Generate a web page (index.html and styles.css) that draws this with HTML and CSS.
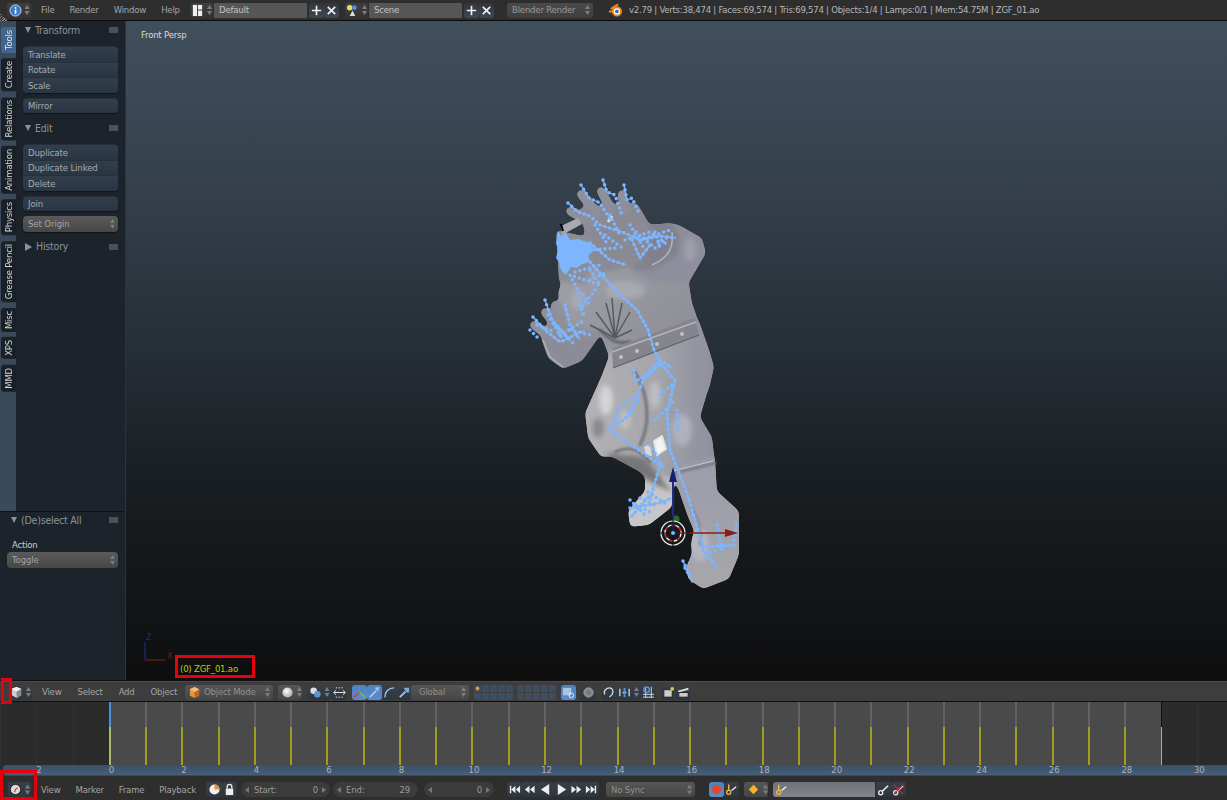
FILE: index.html
```html
<!DOCTYPE html>
<html lang="en">
<head>
<meta charset="utf-8">
<title>Blender 2.79</title>
<link rel="stylesheet" href="styles.css">
</head>
<body>
<svg class="defs" width="0" height="0">
  <defs>
    <linearGradient id="skin" x1="0" y1="0" x2="1" y2="1"><stop offset="0" stop-color="#a0a0a8"/><stop offset="1" stop-color="#85858f"/></linearGradient>
    <linearGradient id="leg" x1="0" y1="0" x2="1" y2="0"><stop offset="0" stop-color="#b4b4b7"/><stop offset=".5" stop-color="#a6a6ab"/><stop offset="1" stop-color="#8e8e9e"/></linearGradient>
    <linearGradient id="boot" x1="0" y1="0" x2="0" y2="1"><stop offset="0" stop-color="#9c9cab"/><stop offset="1" stop-color="#a6a6aa"/></linearGradient>
    <radialGradient id="sph" cx=".4" cy=".35"><stop offset="0" stop-color="#fff"/><stop offset="1" stop-color="#bbb"/></radialGradient>
    <filter id="smooth" x="-10%" y="-10%" width="120%" height="120%" color-interpolation-filters="sRGB">
      <feGaussianBlur stdDeviation="2.600"/>
      <feComponentTransfer><feFuncA type="linear" slope="9" intercept="-4"/></feComponentTransfer>
    </filter>
    <filter id="crease" x="-30%" y="-30%" width="160%" height="160%"><feGaussianBlur stdDeviation="1"/></filter>
    <symbol id="i-cube" viewBox="0 0 14 14"><path d="M7 1l5 2v7l-5 3-5-3V3z" fill="#cfcfcf"/><path d="M7 6l5-3v7l-5 3z" fill="#8a8a8a"/><path d="M2 3l5 3 5-3-5-2z" fill="#f2f2f2"/></symbol>
    <symbol id="i-obj" viewBox="0 0 14 14"><path d="M7 1l5 2.500v7l-5 2.500-5-2.500v-7z" fill="#e8953a"/><path d="M7 6.500l5-3v7l-5 2.500z" fill="#b86a20"/><path d="M2 3.500l5 3 5-3-5-2.500z" fill="#f4be7a"/></symbol>
    <symbol id="i-clock" viewBox="0 0 14 14"><circle cx="7" cy="7" r="5.500" fill="#ddd" stroke="#222"/><path d="M7 7l2.500-2M7 7l-1 3" stroke="#c33" stroke-width="1.200"/></symbol>
    <symbol id="i-key" viewBox="0 0 14 14"><circle cx="4" cy="10.500" r="2.200" fill="none" stroke="#eee" stroke-width="1.400"/><path d="M5.500 9L12 3" stroke="#eee" stroke-width="1.600"/></symbol>
    <symbol id="i-keyy" viewBox="0 0 14 14"><circle cx="4" cy="10" r="2.200" fill="none" stroke="#e8b84a" stroke-width="1.400"/><path d="M4 7.500V1.500" stroke="#e8b84a" stroke-width="1.500"/><path d="M7 8l5-4" stroke="#eee" stroke-width="1.500"/></symbol>
    <symbol id="i-first" viewBox="0 0 14 14"><path d="M2 3h1.500v8H2zM8 3v8L3.500 7zM13 3v8L8.500 7z" fill="#eee"/></symbol>
    <symbol id="i-prev" viewBox="0 0 14 14"><path d="M7 3v8L2 7zM12.500 3v8L7.500 7z" fill="#eee"/></symbol>
    <symbol id="i-next" viewBox="0 0 14 14"><path d="M7 3v8l5-4zM1.500 3v8l5-4z" fill="#eee"/></symbol>
    <symbol id="i-last" viewBox="0 0 14 14"><path d="M12 3h-1.500v8H12zM6 3v8l4.500-4zM1 3v8l4.500-4z" fill="#eee"/></symbol>
  </defs>
</svg>

<header class="bar topbar">
  <div class="btn w24"><svg class="ico" viewBox="0 0 14 14"><circle cx="7" cy="7" r="6" fill="#3d7ac8" stroke="#cfe0f4"/><rect x="6.200" y="6" width="1.700" height="4.500" fill="#fff"/><rect x="6.200" y="3.300" width="1.700" height="1.700" fill="#fff"/></svg><span class="updown"></span></div>
  <nav class="menu m-top"><span>File</span><span>Render</span><span>Window</span><span>Help</span></nav>
  <div class="group g-screen">
    <div class="btn w23"><svg class="ico" viewBox="0 0 14 14"><rect x="2" y="1" width="4.500" height="12" fill="#eee"/><rect x="7.500" y="1" width="4.500" height="5" fill="#eee"/><rect x="7.500" y="7" width="4.500" height="6" fill="#eee"/></svg><span class="updown"></span></div>
    <div class="field f-name">Default</div>
    <div class="btn sym w15"><svg class="ico" viewBox="0 0 14 14"><path d="M7 2v10M2 7h10" stroke="#f0f0f0" stroke-width="1.800"/></svg></div>
    <div class="btn sym w15"><svg class="ico" viewBox="0 0 14 14"><path d="M3 3l8 8M11 3l-8 8" stroke="#f0f0f0" stroke-width="1.800"/></svg></div>
  </div>
  <div class="group g-scene">
    <div class="btn w23"><svg class="ico" viewBox="0 0 14 14"><circle cx="4" cy="4" r="3" fill="#e6e04a"/><circle cx="9" cy="4" r="2.600" fill="#4f8fd8"/><path d="M4 13l3-6 3 6z" fill="#ddd"/></svg><span class="updown"></span></div>
    <div class="field f-name">Scene</div>
    <div class="btn sym w15"><svg class="ico" viewBox="0 0 14 14"><path d="M7 2v10M2 7h10" stroke="#f0f0f0" stroke-width="1.800"/></svg></div>
    <div class="btn sym w15"><svg class="ico" viewBox="0 0 14 14"><path d="M3 3l8 8M11 3l-8 8" stroke="#f0f0f0" stroke-width="1.800"/></svg></div>
  </div>
  <div class="drop d-render">Blender Render<span class="updown"></span></div>
  <svg class="logo" viewBox="0 0 16 16"><path d="M1 9h4M3 6.500l4-3 4-2" stroke="#e8872a" stroke-width="2" fill="none"/><circle cx="9.500" cy="9" r="5.500" fill="#e8872a"/><circle cx="9.500" cy="9" r="3.300" fill="#fff"/><circle cx="9.500" cy="9" r="2" fill="#3a6ea8"/></svg>
  <div class="stats">v2.79 | Verts:38,474 | Faces:69,574 | Tris:69,574 | Objects:1/4 | Lamps:0/1 | Mem:54.75M | ZGF_01.ao</div>
</header>

<main class="workspace">
  <aside class="shelf">
    <div class="shelf-top">
      <div class="tabs">
        <div class="tab active">Tools</div>
        <div class="tab">Create</div>
        <div class="tab">Relations</div>
        <div class="tab">Animation</div>
        <div class="tab">Physics</div>
        <div class="tab">Grease Pencil</div>
        <div class="tab">Misc</div>
        <div class="tab">XPS</div>
        <div class="tab">MMD</div>
      </div>
      <div class="panels">
        <div class="ph"><span class="tri"></span>Transform<span class="grip"></span></div>
        <div class="stack"><div class="tb">Translate</div><div class="tb">Rotate</div><div class="tb">Scale</div></div>
        <div class="stack"><div class="tb">Mirror</div></div>
        <div class="ph ph-edit"><span class="tri"></span>Edit<span class="grip"></span></div>
        <div class="stack"><div class="tb">Duplicate</div><div class="tb">Duplicate Linked</div><div class="tb">Delete</div></div>
        <div class="stack"><div class="tb">Join</div></div>
        <div class="stack"><div class="tb gray">Set Origin<span class="updown"></span></div></div>
        <div class="ph ph-hist"><span class="tri closed"></span>History<span class="grip"></span></div>
      </div>
    </div>
    <div class="shelf-op">
      <div class="ph"><span class="tri"></span>(De)select All<span class="grip"></span></div>
      <div class="op-label">Action</div>
      <div class="tb gray">Toggle<span class="updown"></span></div>
    </div>
  </aside>

  <section class="viewport">
    <div class="persp">Front Persp</div>
    <svg class="figure" viewBox="125 21 1102 659" aria-hidden="true">
      <g filter="url(#smooth)">
        <!-- left arm -->
        <path d="M541 338L548 358L563 369L582 361L599 337L602 320L570 303L550 320Z" fill="#8c8c97"/>
        <!-- torso -->
        <path d="M558 293L562 281L590 270L633 266L657 278L688 278L692 303L699 323L709 350L714 367L709 389L660 402L613 367L600 332L563 324Z" fill="url(#skin)"/>
        <!-- lower body -->
        <path d="M602 375L585 413L588 438L601 457L637 455L658 475L672 485L675 472L715 462L712 437L700 417L709 387L714 367L709 350L699 321L611 351Z" fill="url(#leg)"/>
        <!-- shoulder and forearm -->
        <path d="M631 270L648 225L670 223L679 225L702 238L706 253L695 272L689 282L655 282Z" fill="#8e8e9c"/>
        <path d="M648 225L672 223L679 237L677 255L655 269L631 270Z" fill="#81818d"/>
        <!-- hand -->
        <path d="M580 208L637 203L654 232L642 264L600 274L588 250Z" fill="#8a8a94"/>
        <g fill="none" stroke="#8f8f9a" stroke-width="9" stroke-linecap="round">
          <path d="M581 194L597 213M601 191L610 207M622 194L625 210M570 211L590 222"/>
          <path d="M545 312L562 332M534 325L552 338M555 305L566 325"/>
        </g>
        <!-- head -->
        <path d="M556 230L592 238L594 262L584 284L559 282Z" fill="#8d8d95"/>
        <!-- boots -->
        <path d="M671 468L715 458L717 491L739 511L739 555L729 579L703 589L688 579L686 567L698 540L688 517Z" fill="url(#boot)"/>
        <path d="M645 468L674 481L672 507L649 525L630 527L628 511L645 491Z" fill="#c6c6c8"/>
        <path d="M603 452L645 458L672 492L650 482L640 472Z" fill="#777779"/>
        <!-- modelling -->
        <ellipse cx="606" cy="400" rx="7" ry="15" fill="#d4d4d6"/>
        <ellipse cx="625" cy="420" rx="6" ry="10" fill="#bebec0"/>
        <ellipse cx="598" cy="428" rx="6" ry="10" fill="#8a8a8e"/>
        <ellipse cx="655" cy="395" rx="6" ry="14" fill="#bcbcc2"/>
        <ellipse cx="682" cy="430" rx="10" ry="16" fill="#b0b0be"/>
        <ellipse cx="700" cy="545" rx="9" ry="17" fill="#b6b6c0"/>
        <ellipse cx="625" cy="290" rx="20" ry="9" fill="#a9a9b1"/>
        <ellipse cx="578" cy="300" rx="8" ry="10" fill="#a8a8b0"/>
        <ellipse cx="690" cy="250" rx="6" ry="12" fill="#a0a0ac"/>
      </g>
      <g filter="url(#crease)" fill="none" stroke-linecap="round">
        <path d="M635 372C650 398 650 425 640 445" stroke="#73737b" stroke-width="3"/>
        <path d="M615 452C630 445 640 450 650 462" stroke="#707074" stroke-width="2.500"/>
        <path d="M675 473L715 463" stroke="#77777f" stroke-width="2.500"/>
        <path d="M690 505C700 520 702 530 700 545" stroke="#85858f" stroke-width="2"/>
        <path d="M600 330C610 340 618 345 630 342" stroke="#64646e" stroke-width="3"/>
      </g>
      <!-- chest spikes -->
      <g stroke="#585862" stroke-width="1.500" fill="none">
        <path d="M615 338L606 303M615 338L596 312M615 338L612 298M615 338L622 303M615 338L590 325M615 338L630 312M615 338L632 330"/>
      </g>
      <path d="M652 265C668 258 674 248 672 232" stroke="#b4b4bc" stroke-width="1.500" fill="none"/>
      <path d="M543 340L550 357L563 367" stroke="#b0b0b8" stroke-width="1.500" fill="none"/>
      <path d="M608 222L612 216" stroke="#d8d8d8" stroke-width="3"/>
      <path d="M561 226L578 218L582 224L562 235Z" fill="#a9a9b0"/>
      <path d="M561 224L563 231" stroke="#000" stroke-width="2"/>
      <path d="M673 471L713 461" stroke="#c8c8d0" stroke-width="1"/>
      <!-- belt -->
      <path d="M612 348L695 318L699 335L613 368Z" fill="#85858d"/>
      <path d="M612 352L696 322" stroke="#b4b4ba" stroke-width="1.500"/>
      <path d="M613 368L699 335" stroke="#5f5f68" stroke-width="1.200"/>
      <g fill="#c0c0c6"><circle cx="621" cy="357" r="2"/><circle cx="637" cy="351" r="2"/><circle cx="657" cy="344" r="2"/><circle cx="682" cy="334" r="2"/></g>
      <path d="M654 441L662 436L666 449L657 455Z" fill="#f4f4f4" stroke="#e4e4e4" stroke-width="2" stroke-linejoin="round"/>
      <path d="M644 447L650 444L652 456L646 455Z" fill="#d8d8d8"/>
      <!-- mass of bones over head -->
      <path d="M558 231L561 236L566 233L570 240L578 239L590 243L594 250L588 256L590 262L582 264L577 268L571 267L566 275L561 270L559 262L556 258L558 250L556 243Z" fill="#7db5ff"/>
      <!-- bones -->
      <g fill="none" stroke="#7db5ff" stroke-width="1.300" stroke-linejoin="round">
        <path d="M590 262L620 295L637 310L648 330L654 350L662 365"/>
        <path d="M660 365L643 380L632 413L610 430L660 465"/>
        <path d="M662 365L675 380L667 413L670 450L687 493L703 547"/>
        <path d="M703 547L733 545M683 561L690 576M703 550L716 566"/>
        <path d="M630 508L660 503L672 498M632 516L650 495M660 465L650 500"/>
        <path d="M581 185L589 198L600 203M603 180L607 192L615 195M624 185L627 200L632 198M568 203L578 212L590 216"/>
        <path d="M600 225L622 232L640 240L660 236L676 238M632 240L640 258L650 245"/>
        <path d="M590 243L610 260L626 265"/>
        <path d="M545 300L552 320L570 340M533 317L545 330L560 342L585 330M565 305L570 325L580 340"/>
        <path d="M638 380L646 375L660 360L672 368M634 370L635 380"/>
      </g>
      <g fill="none" stroke="#7db5ff" stroke-width="3.600" stroke-linecap="round" stroke-dasharray="0 5">
        <path d="M590 262L620 295L637 310L648 330L654 350L662 365"/>
        <path d="M660 365L643 380L632 413L610 430L660 465"/>
        <path d="M662 365L675 380L667 413L670 450L687 493L703 547"/>
        <path d="M703 547L733 545L737 522M683 561L690 576M703 550L716 566M685 568L693 582M706 555L725 545M717 525L722 550"/>
        <path d="M630 508L660 503L672 498M632 516L650 495M660 465L650 500"/>
        <path d="M636 505L650 512M640 498L655 505M630 500L645 515M648 492L668 505"/>
        <path d="M581 185L589 198L600 203L612 222M603 180L607 192L615 195L622 215M624 185L627 200L632 198L640 215M568 203L578 212L590 216L600 225"/>
        <path d="M600 225L622 232L640 240L660 236L676 238M632 240L640 258L650 245M625 240L650 232L668 245M636 232L655 248L670 235M630 225L645 250M640 240L670 230M655 232L660 248"/>
        <path d="M590 243L610 260L626 265M595 225L608 245M590 270L600 285L570 275L580 295M590 250L616 248M575 272L600 265M605 235L625 250M610 215L620 235M590 280L608 272"/>
        <path d="M545 300L552 320L570 340M533 317L545 330L560 342L585 330M565 305L570 325L580 340M530 330L540 340M555 325L575 345M560 335L585 320M537 325L555 332M548 315L566 345M570 330L590 335"/>
        <path d="M638 380L646 375L660 360L672 368M634 370L635 380M610 428L620 412M628 412L640 398"/>
        <path d="M583 295L590 305M578 300L585 318M595 290L580 310"/>
        <path d="M617 410L635 395M655 420L675 400M677 410L678 430M660 395L672 385M650 445L665 470"/>
      </g>
      <!-- manipulator and cursor -->
      <path d="M673 533V482" stroke="#1f2a8c" stroke-width="2"/>
      <path d="M669 482L673 467L677 482Z" fill="#14206e"/>
      <path d="M673 533H726" stroke="#8a1c1c" stroke-width="1.500"/>
      <path d="M725 529L738 533L725 537Z" fill="#8a1c1c"/>
      <circle cx="676" cy="519" r="3.500" fill="#2a6a2a"/>
      <circle cx="673" cy="533" r="12" fill="none" stroke="#eee" stroke-width="1.200"/>
      <circle cx="673" cy="533" r="8" fill="none" stroke="#eee" stroke-width="1.500" stroke-dasharray="4 4"/>
      <circle cx="673" cy="533" r="8" fill="none" stroke="#d22" stroke-width="1.500" stroke-dasharray="4 4" stroke-dashoffset="4"/>
      <path d="M673 516V550M656 533H690" stroke="#111" stroke-width="1"/>
      <circle cx="673" cy="533" r="2" fill="#7db5ff"/>
      <!-- axis widget -->
      <path d="M145 660V642" stroke="#1c2a80" stroke-width="1.200" fill="none"/>
      <path d="M145 660H165" stroke="#7a1a1a" stroke-width="1.200" fill="none"/>
      <text x="146" y="640" class="axis axis-z">Z</text>
      <text x="167" y="659" class="axis axis-x">X</text>
    </svg>
    <div class="objname">(0) ZGF_01.ao</div>
  </section>
</main>

<div class="bar view-header">
  <div class="btn d w23"><svg class="ico" viewBox="0 0 14 14"><use href="#i-cube"/></svg><span class="updown"></span></div>
  <nav class="menu m-3d"><span>View</span><span>Select</span><span>Add</span><span>Object</span></nav>
  <div class="drop d-mode"><svg class="ico" viewBox="0 0 14 14"><use href="#i-obj"/></svg>Object Mode<span class="updown"></span></div>
  <div class="drop d-shade"><svg class="ico" viewBox="0 0 14 14"><circle cx="7" cy="7" r="5.500" fill="url(#sph)"/></svg><span class="updown"></span></div>
  <div class="group g-pivot">
    <div class="btn d w24"><svg class="ico" viewBox="0 0 14 14"><circle cx="5" cy="5" r="3.500" fill="#ddd"/><circle cx="9" cy="9" r="3.500" fill="#5c93d8"/></svg><span class="updown"></span></div>
    <div class="btn d w16"><svg class="ico" viewBox="0 0 14 14"><path d="M1 7h12M3 4.500L1 7l2 2.500M11 4.500L13 7l-2 2.500" stroke="#eee" fill="none"/><path d="M3 2h8M3 12h8" stroke="#eee" stroke-dasharray="1.500 1.500"/></svg></div>
  </div>
  <div class="group g-manip">
    <div class="btn on w15"><svg class="ico" viewBox="0 0 14 14"><path d="M7 7V1" stroke="#4a90e0" stroke-width="1.600"/><path d="M7 7L1 12" stroke="#d33" stroke-width="1.600"/><path d="M7 7l6 5" stroke="#6c3" stroke-width="1.600"/></svg></div>
    <div class="btn on w15"><svg class="ico" viewBox="0 0 14 14"><path d="M2 12L9 5" stroke="#9fc8f4" stroke-width="2"/><path d="M7 2l5-1-1 5z" fill="#9fc8f4"/></svg></div>
    <div class="btn d w15"><svg class="ico" viewBox="0 0 14 14"><path d="M2 12C2 6 6 2 12 2" stroke="#9fc8f4" stroke-width="1.500" fill="none"/></svg></div>
    <div class="btn d w14"><svg class="ico" viewBox="0 0 14 14"><path d="M2 12L8 6" stroke="#9fc8f4" stroke-width="2"/><path d="M6 2h6v5h-3z" fill="#7aa9dc"/></svg></div>
  </div>
  <div class="drop d-global">Global<span class="updown"></span></div>
  <div class="layers"><i class="dot"></i><i></i><i></i><i></i><i></i><i></i><i></i><i></i><i></i><i></i></div>
  <div class="layers second"><i></i><i></i><i></i><i></i><i></i><i></i><i></i><i></i><i></i><i></i></div>
  <div class="btn on w15 lockb"><svg class="ico" viewBox="0 0 14 14"><rect x="1" y="2" width="9" height="8" fill="#a8c4e4"/><circle cx="10" cy="10" r="2.500" fill="none" stroke="#eee"/></svg></div>
  <div class="btn d w16 renderb"><svg class="ico" viewBox="0 0 14 14"><circle cx="7" cy="7" r="5" fill="#888" stroke="#999"/><circle cx="7" cy="7" r="2.500" fill="#777"/></svg></div>
  <div class="group g-snap">
    <div class="btn d w15"><svg class="ico" viewBox="0 0 14 14"><path d="M3 9C1 5 5 2 8 2s5 3 3 7L8 12" stroke="#cfd8e4" stroke-width="1.400" fill="none"/></svg></div>
    <div class="btn d w25"><svg class="ico" viewBox="0 0 14 14"><path d="M2 3v8M12 3v8M5 7h4" stroke="#cde" stroke-width="1.400"/><rect x="6" y="2" width="2" height="10" fill="#5c93d8"/></svg><span class="updown"></span></div>
    <div class="btn d w15"><svg class="ico" viewBox="0 0 14 14"><path d="M1 9h12M1 12h12M4 1v12M10 1v12" stroke="#ddd"/><circle cx="5" cy="4" r="3" fill="none" stroke="#5c93d8" stroke-width="1.600"/></svg></div>
  </div>
  <div class="group g-cam">
    <div class="btn d w15"><svg class="ico" viewBox="0 0 14 14"><rect x="2" y="4" width="9" height="8" fill="#ccc" stroke="#222"/><circle cx="11" cy="3" r="2" fill="#e8c34a"/></svg></div>
    <div class="btn d w15"><svg class="ico" viewBox="0 0 14 14"><path d="M1 5l11-3 .6 2-11 3z" fill="#ddd"/><rect x="2" y="7" width="10" height="5" fill="#ccc" stroke="#222"/></svg></div>
  </div>
</div>

<section class="timeline">
  <div class="f dead"></div><div class="f dead"></div><div class="f dead"></div>
  <div class="f cur"></div><div class="f"></div><div class="f"></div><div class="f"></div><div class="f"></div><div class="f"></div><div class="f"></div><div class="f"></div><div class="f"></div><div class="f"></div>
  <div class="f"></div><div class="f"></div><div class="f"></div><div class="f"></div><div class="f"></div><div class="f"></div><div class="f"></div><div class="f"></div><div class="f"></div><div class="f"></div>
  <div class="f"></div><div class="f"></div><div class="f"></div><div class="f"></div><div class="f"></div><div class="f"></div><div class="f"></div><div class="f"></div><div class="f"></div>
  <div class="f end"></div><div class="f dead"></div>
</section>
<div class="ruler">
  <span>2</span><span>0</span><span>2</span><span>4</span><span>6</span><span>8</span><span>10</span><span>12</span><span>14</span><span>16</span><span>18</span><span>20</span><span>22</span><span>24</span><span>26</span><span>28</span><span>30</span>
</div>

<footer class="bar time-header">
  <div class="btn d w23"><svg class="ico" viewBox="0 0 14 14"><use href="#i-clock"/></svg><span class="updown"></span></div>
  <nav class="menu m-time"><span>View</span><span>Marker</span><span>Frame</span><span>Playback</span></nav>
  <div class="group g-prev">
    <div class="btn d w16"><svg class="ico" viewBox="0 0 14 14"><circle cx="7" cy="7" r="5.500" fill="#eee"/><path d="M7 7V1.500A5.500 5.500 0 0 1 12.500 7z" fill="#e8932a"/></svg></div>
    <div class="btn d w15"><svg class="ico" viewBox="0 0 14 14"><rect x="3" y="6" width="8" height="7" fill="#eee"/><path d="M4.500 6V4a2.500 2.500 0 0 1 5 0v2" stroke="#eee" stroke-width="1.400" fill="none"/></svg></div>
  </div>
  <div class="range r-start"><i class="la"></i><span>Start:</span><b>0</b><i class="ra"></i></div>
  <div class="range r-end"><i class="la"></i><span>End:</span><b>29</b></div>
  <div class="range r-cur"><i class="la"></i><b>0</b><i class="ra"></i></div>
  <div class="group g-trans">
    <div class="btn d w15"><svg class="ico" viewBox="0 0 14 14"><use href="#i-first"/></svg></div>
    <div class="btn d w15"><svg class="ico" viewBox="0 0 14 14"><use href="#i-prev"/></svg></div>
    <div class="btn d w16"><svg class="ico" viewBox="0 0 14 14"><path d="M11 1v12L2 7z" fill="#eee"/></svg></div>
    <div class="btn d w16"><svg class="ico" viewBox="0 0 14 14"><path d="M3 1v12l9-6z" fill="#eee"/></svg></div>
    <div class="btn d w15"><svg class="ico" viewBox="0 0 14 14"><use href="#i-next"/></svg></div>
    <div class="btn d w15"><svg class="ico" viewBox="0 0 14 14"><use href="#i-last"/></svg></div>
  </div>
  <div class="drop d-sync">No Sync<span class="updown"></span></div>
  <div class="group g-rec">
    <div class="btn on w15"><svg class="ico rec" viewBox="0 0 14 14"><circle cx="7" cy="7" r="5" fill="#e0482a"/></svg></div>
    <div class="btn d w15"><svg class="ico" viewBox="0 0 14 14"><use href="#i-keyy"/></svg></div>
  </div>
  <div class="drop d-key"><svg class="ico" viewBox="0 0 14 14"><path d="M7 2l5 5-5 5-5-5z" fill="#f0b52a"/></svg><span class="updown"></span></div>
  <div class="keyset"><svg class="ico" viewBox="0 0 14 14"><use href="#i-keyy"/></svg></div>
  <div class="group g-keys">
    <div class="btn d w15"><svg class="ico" viewBox="0 0 14 14"><use href="#i-key"/></svg></div>
    <div class="btn d w15"><svg class="ico" viewBox="0 0 14 14"><use href="#i-key"/><path d="M2 2l10 10M12 2L2 12" stroke="#e22" stroke-width="1.200"/></svg></div>
  </div>
</footer>

<div class="mark mark-name"></div>
<div class="mark mark-view"></div>
<div class="mark mark-time"></div>
<div class="hatch hatch-top"></div>
</body>
</html>
```
FILE: styles.css
```css
* { box-sizing: border-box; }
html, body { margin: 0; padding: 0; }
body {
  position: relative;
  width: 1227px;
  height: 800px;
  overflow: hidden;
  display: flex;
  flex-direction: column;
  background: #2d2d2d;
  color: #a9a9a9;
  font: 9.500px/1 "DejaVu Sans Condensed", "DejaVu Sans", sans-serif;
  font-stretch: condensed;
  letter-spacing: -0.2px;
}
.defs { position: absolute; }
.bar { display: flex; align-items: center; flex: none; white-space: nowrap; }
.topbar { height: 21px; background: #2e2e2e; border-bottom: 1px solid #0c0c0c; padding: 0 0 0 7px; }
.view-header { height: 21px; background: #3d3d3d; border-top: 1px solid #111; padding: 2px 0 0 9px; box-shadow: inset 0 1px #4a4a4a; }
.time-header { height: 25px; background: #2e2e2e; border-top: 1px solid #454545; padding: 3px 0 0 8px; }

.ico { width: 13px; height: 13px; flex: none; display: block; }
.btn {
  display: flex; align-items: center; justify-content: center; flex: none; height: 15px;
  background: linear-gradient(#2c3744, #3a4857); border-radius: 3px; color: #eee;
}
.btn.d { background: linear-gradient(#3a3f46, #2d3640); }
.btn.on { background: linear-gradient(#4f80c0, #5a8ccc); }
.topbar .btn { background: linear-gradient(#3f3f3f, #333); height: 15px; }
.w14 { width: 14px; } .w15 { width: 15px; } .w16 { width: 16px; }
.w23 { width: 23px; } .w24 { width: 24px; } .w25 { width: 25px; }
.topbar .btn.sym { background: linear-gradient(#32363b, #3d4854); }
.updown {
  width: 5px; height: 10px; flex: none; margin-left: 3px; background: #7d7d7d;
  clip-path: polygon(50% 0, 100% 40%, 0 40%, 50% 0, 50% 100%, 0 60%, 100% 60%, 50% 100%);
}

.menu { display: flex; flex: none; color: #a5a5a5; margin-left: 10px; }
.m-top { width: 149px; gap: 15px; }
.m-3d { width: 143px; gap: 16px; }
.m-time { width: 165px; gap: 15px; }

.group { display: flex; flex: none; }
.field { height: 15px; background: #565656; color: #c4c4c4; display: flex; align-items: center; padding-left: 5px; border-radius: 1px; }
.f-name { width: 93px; margin-left: 1px; margin-right: 2px; }
.drop { display: flex; align-items: center; height: 15px; background: linear-gradient(#565656, #464646); border-radius: 3px; color: #8f8f8f; padding: 0 3px 0 5px; flex: none; gap: 3px; }
.drop .updown { margin-left: auto; }
.g-scene { margin-left: 6px; }
.d-render { width: 86px; margin-left: 13px; background: linear-gradient(#4a4a4a, #3e3e3e); color: #999; }
.logo { width: 15px; height: 15px; margin-left: 15px; flex: none; }
.stats { margin-left: 6px; color: #b8b8b8; white-space: nowrap; letter-spacing: -0.25px; }

.workspace { flex: none; height: 659px; display: flex; }
.shelf { width: 126px; flex: none; display: flex; flex-direction: column; background: #1c232b; border-right: 1px solid #2a3440; }
.shelf-top { height: 491px; display: flex; flex: none; border-bottom: 1px solid #0e1216; }
.tabs { width: 16px; flex: none; background: #3b4a5a; padding: 6px 0 0 1px; display: flex; flex-direction: column; gap: 5.500px; }
.tab {
  writing-mode: vertical-rl; transform: rotate(180deg);
  background: #1a2027; color: #d4d4d4; width: 15px; padding: 3px 0; font-size: 9.500px;
  display: flex; align-items: center; border-radius: 0 3px 3px 0; white-space: nowrap;
}
.tab.active { background: #40668f; color: #e0e4ea; }
.panels { flex: 1; padding: 1px 7px 0 7px; display: flex; flex-direction: column; }
.ph { display: flex; align-items: center; flex: none; height: 16px; font-size: 10.500px; color: #8d9298; gap: 4px; }
.tri { width: 0; height: 0; border-left: 3.500px solid transparent; border-right: 3.500px solid transparent; border-top: 6px solid #8d9298; margin: 0 0 0 2px; }
.tri.closed { border: 4px solid transparent; border-left: 7px solid #8d9298; border-right: 0; }
.grip { margin-left: auto; width: 9px; height: 6px; background: radial-gradient(circle, #4d5258 0.7px, transparent 1px) 0 0/2px 2px; }
.ph-edit { margin-top: 7px; }
.ph-hist { margin-top: 7px; }
.stack { display: flex; flex-direction: column; flex: none; margin-top: 5px; box-shadow: 0 1px 1px #11161b; border-radius: 4px; }
.ph + .stack { margin-top: 8px; }
.tb {
  height: 15.500px; display: flex; align-items: center; flex: none; padding: 0 3px 0 5px;
  background: linear-gradient(#323e4c, #2a3542); border-top: 1px solid #262f3a; color: #a6abb1;
  letter-spacing: -0.1px;
}
.tb:first-child { border-radius: 4px 4px 0 0; }
.tb:last-child { border-radius: 0 0 4px 4px; }
.tb:only-child { border-radius: 4px; }
.tb.gray { background: linear-gradient(#5a5a5a, #474747); border: 0; color: #a4a4a4; }
.tb.gray .updown { margin-left: auto; }
.shelf-op { flex: 1; padding: 0 7px 0 7px; display: flex; flex-direction: column; }
.shelf-op .ph { padding-left: 2px; }
.op-label { margin-top: 12px; padding-left: 5px; height: 12px; color: #ccc; }
.shelf-op .tb { height: 16px; border-radius: 4px; }

.viewport { flex: 1; position: relative; overflow: hidden; background: linear-gradient(#414f5d 0%, #36424e 22%, #262e36 50%, #191e22 70%, #0e0e0f 100%); }
.persp { position: absolute; left: 15px; top: 9px; color: #dcdcdc; }
.figure { position: absolute; left: -1px; top: 0; width: 1102px; height: 659px; }
.axis { font: 8px "DejaVu Sans", sans-serif; }
.axis-z { fill: #1c2a80; }
.axis-x { fill: #7a1a1a; }
.objname { position: absolute; left: 54px; top: 643px; color: #c9c900; }

.d-mode { width: 88px; padding-left: 3px; }
.d-shade { width: 23px; margin-left: 5px; padding: 0 2px 0 3px; }
.g-pivot { margin-left: 6px; }
.g-manip { margin-left: 5px; }
.d-global { width: 58px; padding-left: 8px; }
.layers { width: 39px; height: 15px; margin-left: 5px; flex: none; display: grid; grid-template: repeat(2, 1fr) / repeat(5, 1fr); gap: 1px; border-radius: 3px; overflow: hidden; }
.layers.second { margin-left: 4px; }
.layers i { background: #3e4e60; display: block; }
.layers i.dot { background: radial-gradient(circle, #e8953a 1.700px, #3e4e60 2.200px); }
.lockb { margin-left: 5px; }
.renderb { margin-left: 4px; }
.g-snap { margin-left: 5px; }
.g-cam { margin-left: 5px; }

.timeline { flex: none; height: 64px; display: grid; grid-template-columns: repeat(34, 36.27px); border-top: 1px solid #0f0f0f; background: #2b2b2b; overflow: hidden; }
.f { background:
  linear-gradient(#626262, #626262) 0 0/2px 25px no-repeat,
  linear-gradient(#a49c1e, #a49c1e) 0 100%/2px 38px no-repeat,
  #4a4a4a; }
.f.dead { background: linear-gradient(#323232, #323232) 0 0/1px 100% no-repeat, #2b2b2b; }
.f.cur { background:
  linear-gradient(#4a90e0, #4a90e0) 0 0/2px 25px no-repeat,
  linear-gradient(#a9bc6a, #a9bc6a) 0 100%/2px 38px no-repeat,
  #4a4a4a; }
.f.end { background:
  linear-gradient(#111, #111) 0 0/1px 25px no-repeat,
  linear-gradient(#c4bb20, #c4bb20) 0 100%/1px 38px no-repeat,
  #2b2b2b; }
.ruler { flex: none; height: 10px; background: linear-gradient(#3a5068, #465e78); color: #aab2ba; display: grid; grid-template-columns: repeat(17, 72.54px); margin-left: 2.600px; width: 1224.400px; line-height: 10px; text-align: center; border-radius: 4px 0 0 4px; overflow: hidden; letter-spacing: 0; }
.ruler span { display: block; }

.g-prev { margin-left: 0; }
.range { height: 15px; display: flex; align-items: center; background: #3b3b3b; border-radius: 8px; color: #9a9a9a; flex: none; padding: 0 4px; }
.range span { margin-left: 5px; }
.range b { font-weight: normal; margin-left: auto; margin-right: 4px; }
.la { border: 3px solid transparent; border-right: 4px solid #777; border-left: 0; }
.ra { border: 3px solid transparent; border-left: 4px solid #777; border-right: 0; }
.r-start { width: 89px; margin-left: 4px; }
.r-end { width: 85px; margin-left: 3px; }
.r-cur { width: 70px; margin-left: 6px; }
.g-trans { margin-left: 13px; }
.d-sync { width: 89px; margin-left: 7px; }
.g-rec { margin-left: 14px; }
.d-key { width: 24px; margin-left: 5px; padding: 0 2px 0 3px; }
.keyset { width: 102px; height: 15px; margin-left: 5px; background: linear-gradient(#6c7278, #80868c); border-radius: 3px 0 0 3px; display: flex; align-items: center; padding-left: 2px; flex: none; }
.g-keys { margin-left: 1px; }

.mark { position: absolute; border: 3px solid #e9000c; }
.mark-name { left: 175px; top: 655px; width: 80px; height: 23px; }
.mark-view { left: 1px; top: 678px; width: 11px; height: 26px; }
.mark-time { left: 0; top: 770px; width: 37px; height: 30px; }
.hatch { position: absolute; width: 8px; height: 8px; background: repeating-linear-gradient(135deg, transparent 0 1px, #888 1px 2px); clip-path: polygon(0 0, 100% 100%, 0 100%); }
.hatch-top { left: 0; top: 13px; }
```
